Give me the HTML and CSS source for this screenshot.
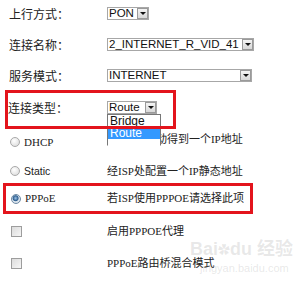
FILE: index.html
```html
<!DOCTYPE html>
<html lang="zh-CN">
<head>
  <meta charset="UTF-8">
  <title>WAN 连接设置</title>
  <link rel="stylesheet" href="styles.css">
</head>
<body>
  <div class="page">
    <div class="row r1">
      <div class="label">上行方式：</div>
      <div class="select w-pon"><span class="val">PON</span><span class="arrow"></span></div>
    </div>
    <div class="row r2">
      <div class="label">连接名称：</div>
      <div class="select w-name"><span class="val">2_INTERNET_R_VID_41</span><span class="arrow"></span></div>
    </div>
    <div class="row r3">
      <div class="label">服务模式：</div>
      <div class="select w-mode"><span class="val">INTERNET</span><span class="arrow"></span></div>
    </div>

    <!-- 连接类型，下拉列表展开 -->
    <div class="row box1 mark">
      <div class="label">连接类型：</div>
      <div class="select w-type">
        <span class="val">Route</span><span class="arrow"></span>
        <div class="dropdown">
          <div class="opt">Bridge</div>
          <div class="opt active">Route</div>
        </div>
      </div>
    </div>

    <div class="row r5">
      <div class="label opt-label"><span class="radio"></span><span class="serif">DHCP</span></div>
      <div class="desc up">从ISP处自动得到一个IP地址</div>
    </div>
    <div class="row r6">
      <div class="label opt-label"><span class="radio"></span><span class="sans">Static</span></div>
      <div class="desc">经ISP处配置一个IP静态地址</div>
    </div>
    <div class="row box2 mark">
      <div class="label opt-label"><span class="radio checked"></span><span class="serif">PPPoE</span></div>
      <div class="desc">若ISP使用PPPOE请选择此项</div>
    </div>
    <div class="row r8">
      <div class="label opt-label"><span class="checkbox"></span></div>
      <div class="desc">启用PPPOE代理</div>
    </div>
    <div class="row r9">
      <div class="label opt-label"><span class="checkbox"></span></div>
      <div class="desc">PPPoE路由桥混合模式</div>
    </div>

    <div class="watermark">
      <div class="wm-logo">Bai<span class="paw">&#10047;</span>du 经验</div>
      <div class="wm-url">jingyan.baidu.com</div>
    </div>
  </div>
</body>
</html>
```

FILE: styles.css
```css
body {
  margin: 0;
  background: #fff;
  font-family: "Noto Sans CJK SC", sans-serif;
  color: #222;
}
.page {
  position: relative;
  width: 293px;
  height: 284px;
  overflow: hidden;
}
.row {
  display: flex;
  align-items: center;
  padding-left: 9px;
  box-sizing: border-box;
}
.label {
  width: 98px;
  flex: none;
  font-size: 12px;
  line-height: 13px;
}
.r1 { height: 27px; }
.r2 { height: 35px; }
.r3 { height: 27px; }
.r5 { height: 26px; padding-left: 10px; }
.r6 { height: 28px; padding-left: 10px; padding-top: 4px; }
.r8 { height: 34px; padding-left: 11px; }
.r9 { height: 30px; padding-left: 11px; }

/* selects, old windows look */
.select {
  position: relative;
  display: flex;
  align-items: center;
  height: 13px;
  box-sizing: border-box;
  border: 1px solid #a7a7a7;
  background: #fff;
  font-family: "Liberation Sans", Arial, sans-serif;
  font-size: 11.5px;
  color: #111;
}
.select .val {
  flex: 1;
  padding-left: 1px;
  line-height: 11px;
  white-space: nowrap;
  overflow: hidden;
}
.select .arrow {
  position: relative;
  width: 11px;
  height: 11px;
  box-sizing: border-box;
  border: 1px solid #9a9a9a;
  background: linear-gradient(#f4f4f4, #d8d8d8);
}
.select .arrow::after {
  content: "";
  position: absolute;
  left: 2px;
  top: 3px;
  border-left: 3px solid transparent;
  border-right: 3px solid transparent;
  border-top: 3px solid #111;
}
.w-pon { width: 42px; }
.w-name { width: 147px; }
.w-mode { width: 145px; }
.w-type { width: 50px; }

/* red annotation boxes */
.mark {
  position: relative;
}
.mark::after {
  content: "";
  position: absolute;
  inset: 0;
  border: 3px solid #e3141c;
  z-index: 3;
  pointer-events: none;
}
.box1 {
  margin-top: 1px;
  margin-left: 5px;
  width: 171px;
  height: 39px;
  padding-left: 3px;
  padding-top: 11px;
  align-items: flex-start;
}
.box1 .label { width: 99px; }
.box2 {
  margin-left: 3px;
  width: 250px;
  height: 31px;
  padding-left: 8px;
}
.box2 .label { width: 96px; }
.r5 .label, .r6 .label { width: 97px; }
.r8 .label, .r9 .label { width: 96px; }

.dropdown {
  position: absolute;
  left: -1px;
  top: 12px;
  width: 52px;
  border: 1px solid #777;
  border-bottom-color: #fff;
  padding-bottom: 6px;
  background: #fff;
  z-index: 2;
}
.opt {
  height: 12px;
  line-height: 12px;
  padding-left: 2px;
  font-size: 12px;
}
.opt.active {
  background: #3399ff;
  color: #fff;
}

.opt-label {
  display: flex;
  align-items: center;
  font-size: 11px;
}
.serif { font-family: "Liberation Serif", serif; }
.sans { font-family: "Liberation Sans", Arial, sans-serif; font-size: 10.5px; }
.radio {
  width: 10px;
  height: 10px;
  box-sizing: border-box;
  border-radius: 50%;
  border: 1px solid #a9a9a9;
  background: radial-gradient(circle at 40% 35%, #fff, #d6d6d6);
  margin-right: 4px;
  flex: none;
}
.radio.checked {
  border-color: #6d8aa5;
  background: radial-gradient(circle at 45% 40%, #9cc4ea 0, #2f5f8f 2.5px, #dfe8f0 3.5px, #c9d3dc);
}
.checkbox {
  width: 11px;
  height: 11px;
  box-sizing: border-box;
  border: 1px solid #9d9d9d;
  background: linear-gradient(135deg, #dcdcdc, #f6f6f6);
}
.desc {
  font-family: "Liberation Serif", "Noto Sans CJK SC", serif;
  font-size: 11px;
  line-height: 13px;
  white-space: nowrap;
}
.desc.up {
  margin-top: -6px;
}

.watermark {
  position: absolute;
  left: 190px;
  top: 238px;
  color: rgba(150, 150, 150, 0.22);
  white-space: nowrap;
  z-index: 4;
}
.wm-logo {
  font-family: "Liberation Sans", "Noto Sans CJK SC", sans-serif;
  font-size: 18px;
  font-weight: bold;
  line-height: 22px;
}
.paw { font-size: 12px; }
.wm-url {
  font-family: "Liberation Sans", sans-serif;
  font-size: 11px;
  line-height: 12px;
  padding-left: 10px;
}
```
